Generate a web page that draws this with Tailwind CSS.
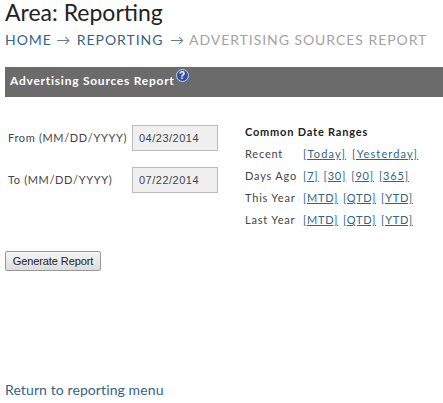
<!DOCTYPE html>
<html lang="en">
<head>
  <meta charset="UTF-8">
  <title>Advertising Sources Report</title>
  <script src="https://cdn.jsdelivr.net/npm/@tailwindcss/browser@4"></script>
</head>
<body class="bg-white font-['Lato',sans-serif] text-[#333] overflow-hidden">
  <div class="w-[443px] h-[403px] pl-[5px] overflow-hidden">
    <h1 class="text-[23px] leading-[25px] text-[#222] font-normal">Area: Reporting</h1>
    <!-- breadcrumb -->
    <div class="mt-[5px] h-[20px] text-[14px] leading-[20px] tracking-[0.95px] whitespace-nowrap text-[#a3a3a3]">
      <a href="#" class="text-[#33657f]">HOME</a> <span class="text-[#5f7f91]">&rarr;</span>
      <a href="#" class="ml-[1px] text-[#33657f]">REPORTING</a> <span class="ml-[2px] text-[#5f7f91]">&rarr;</span>
      <span>ADVERTISING SOURCES REPORT</span>
    </div>
    <!-- header bar -->
    <div class="mt-[17px] h-[30px] bg-[#6b6b6b] pl-[5px] pt-[6px] flex items-start text-white font-bold text-[12px] leading-[16px] tracking-[0.75px]">
      <span>Advertising Sources Report</span>
      <svg class="ml-[1px] -mt-[4px]" width="13" height="13" viewBox="0 0 13 13">
        <circle cx="6.5" cy="6.5" r="6" fill="#2f4fa8" stroke="#c9d4f0"/>
        <text x="6.5" y="10" text-anchor="middle" font-size="10" font-weight="700" font-family="Liberation Sans" fill="#fff">?</text>
      </svg>
    </div>
    <div class="flex mt-[28px] h-[126px]">
      <!-- date fields -->
      <div class="w-[240px] pl-[3px] text-[11px] tracking-[0.65px] text-[#444]">
        <div class="flex items-center h-[26px]">
          <label class="w-[124px] whitespace-nowrap">From (MM/DD/YYYY)</label>
          <input value="04/23/2014" class="w-[86px] h-[26px] bg-[#f0f0f0] border border-[#bbb] pl-[6px] font-['Liberation_Sans',sans-serif] text-[11px] tracking-[0.5px] text-[#444]">
        </div>
        <div class="flex items-center h-[26px] mt-[16px]">
          <label class="w-[124px] whitespace-nowrap">To (MM/DD/YYYY)</label>
          <input value="07/22/2014" class="w-[86px] h-[26px] bg-[#f0f0f0] border border-[#bbb] pl-[6px] font-['Liberation_Sans',sans-serif] text-[11px] tracking-[0.5px] text-[#444]">
        </div>
      </div>
      <!-- common ranges -->
      <div class="text-[11px] leading-[22px] tracking-[0.8px] text-[#444] whitespace-nowrap -mt-[4px]">
        <div class="font-bold text-[#222]">Common Date Ranges</div>
        <div class="flex"><span class="w-[58px]">Recent</span><span class="flex gap-[6px] tracking-[1.15px] text-[#33657f] underline"><a href="#">[Today]</a><a href="#">[Yesterday]</a></span></div>
        <div class="flex"><span class="w-[58px]">Days Ago</span><span class="flex gap-[5px] text-[#33657f] underline"><a href="#">[7]</a><a href="#">[30]</a><a href="#">[90]</a><a href="#">[365]</a></span></div>
        <div class="flex"><span class="w-[58px]">This Year</span><span class="flex gap-[5px] tracking-[0.7px] text-[#33657f] underline"><a href="#">[MTD]</a><a href="#">[QTD]</a><a href="#">[YTD]</a></span></div>
        <div class="flex"><span class="w-[58px]">Last Year</span><span class="flex gap-[5px] tracking-[0.7px] text-[#33657f] underline"><a href="#">[MTD]</a><a href="#">[QTD]</a><a href="#">[YTD]</a></span></div>
      </div>
    </div>
    <button class="block w-[96px] h-[20px] rounded-[2px] border border-[#999] bg-gradient-to-b from-[#f6f6f6] to-[#dcdcdc] font-['Liberation_Sans',sans-serif] text-[11px] tracking-[-0.1px] text-[#222]">Generate Report</button>
    <a href="#" class="block mt-[109px] text-[14px] leading-[20px] tracking-[0.1px] text-[#33657f]">Return to reporting menu</a>
  </div>
</body>
</html>
